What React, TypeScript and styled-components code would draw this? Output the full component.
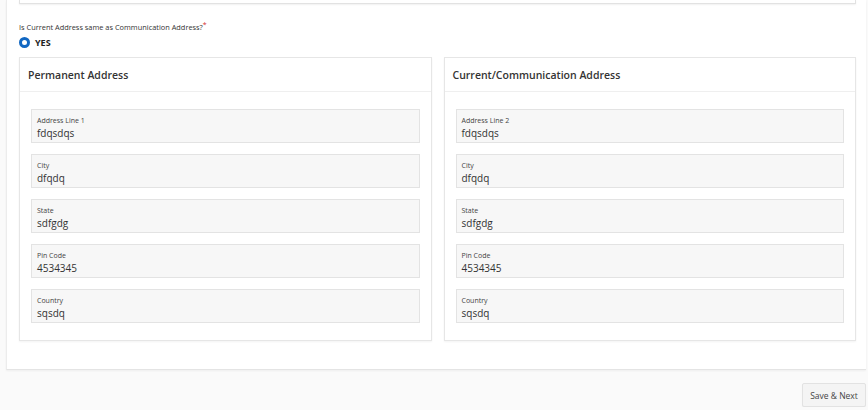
import React from 'react';
import styled, { createGlobalStyle } from 'styled-components';

const GlobalStyle = createGlobalStyle`
  body {
    margin: 0;
    background: #fafafa;
    font-family: 'Open Sans', 'Noto Sans', sans-serif;
    color: #333;
  }
`;

const Panel = styled.div`
  margin-left: 6px;
  width: 860px;
  box-sizing: border-box;
  background: #fff;
  border-left: 1px solid #ececec;
  border-bottom: 1px solid #e4e4e4;
  box-shadow: 0 1px 2px rgba(0, 0, 0, 0.05);
  padding: 0 10px 28px 12px;
`;

const PrevCardEdge = styled.div`
  height: 3px;
  border: 1px solid #e2e2e2;
  border-top: none;
  box-shadow: 0 1px 2px rgba(0, 0, 0, 0.06);
`;

const Question = styled.div`
  margin-top: 17px;
  font-size: 7.4px;
  line-height: 12px;
  color: #333;

  sup {
    color: #d32f2f;
    font-size: 7px;
    vertical-align: 3px;
    line-height: 0;
  }
`;

const RadioRow = styled.label`
  display: flex;
  align-items: center;
  gap: 5px;
  margin-top: 3px;
  font-size: 9px;
  font-weight: 700;
  color: #222;
`;

const RadioDot = styled.span`
  width: 11px;
  height: 11px;
  box-sizing: border-box;
  border-radius: 50%;
  border: 3px solid #1167c2;
  background: #fff;
`;

const Columns = styled.div`
  display: grid;
  grid-template-columns: 1fr 1fr;
  gap: 12px;
  margin-top: 8px;
`;

const Card = styled.section`
  border: 1px solid #e6e6e6;
  box-shadow: 0 1px 2px rgba(0, 0, 0, 0.05);
  background: #fff;
`;

const CardHeader = styled.h3`
  margin: 0;
  height: 33px;
  display: flex;
  align-items: center;
  padding-left: 8px;
  font-size: 10.5px;
  font-weight: 600;
  color: #333;
  border-bottom: 1px solid #efefef;
`;

const CardBody = styled.div`
  padding: 17px 11px 17px 11px;
  display: flex;
  flex-direction: column;
  gap: 11px;
`;

const Field = styled.div`
  height: 34px;
  box-sizing: border-box;
  background: #f7f7f7;
  border: 1px solid #e3e3e3;
  padding: 6px 5px 0 5px;
`;

const FieldLabel = styled.div`
  font-size: 7px;
  line-height: 10px;
  color: #444;
`;

const FieldValue = styled.div`
  margin-top: 1px;
  font-size: 10px;
  line-height: 13px;
  color: #333;
`;

const Footer = styled.div`
  display: flex;
  justify-content: flex-end;
  padding: 13px 2px 0 0;
`;

const Button = styled.button`
  height: 24px;
  width: 64px;
  padding: 0;
  font-family: inherit;
  font-size: 8.5px;
  color: #444;
  background: #f4f4f4;
  border: 1px solid #e2e2e2;
  border-radius: 2px;
  box-shadow: 0 1px 1px rgba(0, 0, 0, 0.05);
`;

type Row = { label: string; value: string };

const permanent: Row[] = [
  { label: 'Address Line 1', value: 'fdqsdqs' },
  { label: 'City', value: 'dfqdq' },
  { label: 'State', value: 'sdfgdg' },
  { label: 'Pin Code', value: '4534345' },
  { label: 'Country', value: 'sqsdq' },
];

const current: Row[] = [
  { label: 'Address Line 2', value: 'fdqsdqs' },
  { label: 'City', value: 'dfqdq' },
  { label: 'State', value: 'sdfgdg' },
  { label: 'Pin Code', value: '4534345' },
  { label: 'Country', value: 'sqsdq' },
];

const AddressCard: React.FC<{ title: string; rows: Row[] }> = ({ title, rows }) => (
  <Card>
    <CardHeader>{title}</CardHeader>
    <CardBody>
      {rows.map((r) => (
        <Field key={r.label}>
          <FieldLabel>{r.label}</FieldLabel>
          <FieldValue>{r.value}</FieldValue>
        </Field>
      ))}
    </CardBody>
  </Card>
);

export default function App() {
  return (
    <>
      <GlobalStyle />
      <Panel>
        <PrevCardEdge />
        <Question>
          Is Current Address same as Communication Address?<sup>*</sup>
        </Question>
        <RadioRow>
          <RadioDot />
          YES
        </RadioRow>
        <Columns>
          <AddressCard title="Permanent Address" rows={permanent} />
          <AddressCard title="Current/Communication Address" rows={current} />
        </Columns>
      </Panel>
      <Footer>
        <Button>Save &amp; Next</Button>
      </Footer>
    </>
  );
}
